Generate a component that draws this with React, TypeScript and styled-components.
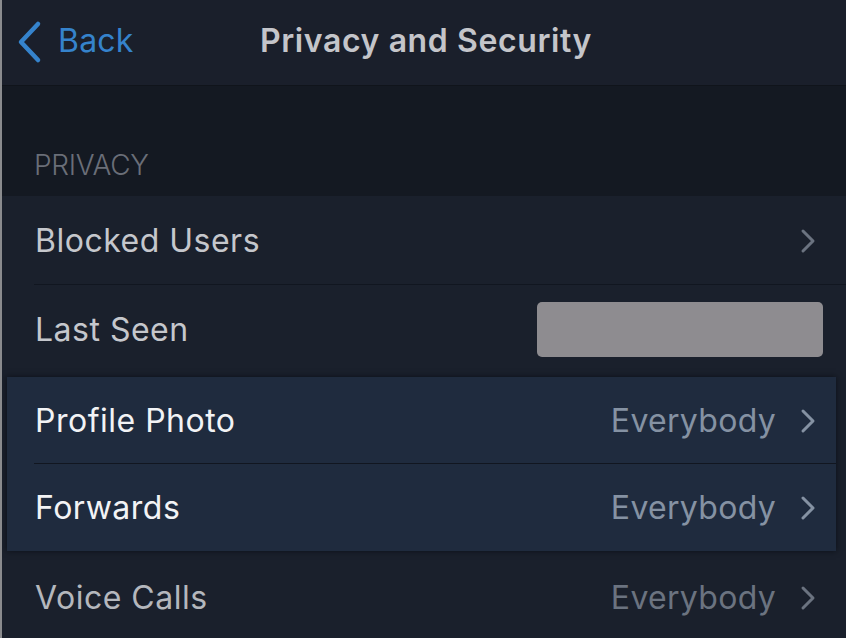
import React from "react";
import styled, { createGlobalStyle } from "styled-components";

const GlobalStyle = createGlobalStyle`
  html, body {
    margin: 0;
    padding: 0;
    background: #141922;
  }
  body {
    font-family: Inter, "Noto Sans", sans-serif;
    -webkit-font-smoothing: antialiased;
  }
`;

type Tone = "normal" | "lit" | "dim";

type Item = {
  label: string;
  value?: string;
  hidden?: boolean;
  chevron?: boolean;
};

const Chevron = ({ color }: { color: string }) => (
  <svg width="16" height="26" viewBox="0 0 16 26">
    <path
      d="M3 3 L13 13 L3 23"
      fill="none"
      stroke={color}
      strokeWidth="3"
      strokeLinecap="round"
      strokeLinejoin="round"
    />
  </svg>
);

const Row = ({ label, value, hidden, chevron, tone, last }: Item & { tone: Tone; last?: boolean }) => (
  <RowWrap $last={last} $lit={tone === "lit"}>
    <Label $tone={tone}>{label}</Label>
    <Right>
      {hidden && <Redacted />}
      {value && <Value $tone={tone}>{value}</Value>}
      {chevron && <Chevron color={tone === "lit" ? "#8592a3" : "#6b7380"} />}
    </Right>
  </RowWrap>
);

const App = () => {
  return (
    <Page>
      <GlobalStyle />
      <NavBar>
        <BackButton>
          <svg width="28" height="44" viewBox="0 0 28 44">
            <path
              d="M22 4 L5 22 L22 40"
              fill="none"
              stroke="#3583cc"
              strokeWidth="4.5"
              strokeLinecap="round"
              strokeLinejoin="round"
            />
          </svg>
          <span>Back</span>
        </BackButton>
        <Title>Privacy and Security</Title>
      </NavBar>

      <SectionHeader>PRIVACY</SectionHeader>

      <List>
        <Row label="Blocked Users" chevron tone="normal" />
        <Row label="Last Seen" hidden tone="normal" last />
        <Highlight>
          <Row label="Profile Photo" value="Everybody" chevron tone="lit" />
          <Row label="Forwards" value="Everybody" chevron tone="lit" last />
        </Highlight>
        <Row label="Voice Calls" value="Everybody" chevron tone="dim" last />
      </List>
    </Page>
  );
};

export default App;

const Page = styled.div`
  width: 846px;
  height: 638px;
  overflow: hidden;
  box-sizing: border-box;
  border-left: 2px solid #8a8b8e;
  display: flex;
  flex-direction: column;
  background: #1a202c;
`;

const NavBar = styled.div`
  height: 86px;
  flex-shrink: 0;
  background: #1a1f2b;
  border-bottom: 1px solid #10141b;
  box-sizing: border-box;
  display: flex;
  align-items: center;
  justify-content: center;
  position: relative;
`;

const BackButton = styled.div`
  position: absolute;
  left: 14px;
  top: 20px;
  display: flex;
  align-items: center;
  gap: 14px;
  color: #3583cc;
  font-size: 32px;
  letter-spacing: 0.2px;

  span {
    margin-top: -3px;
  }
`;

const Title = styled.div`
  color: #c4c5ca;
  font-size: 32px;
  font-weight: 600;
  letter-spacing: 0.6px;
  margin-top: -4px;
  margin-left: 4px;
`;

const SectionHeader = styled.div`
  height: 110px;
  flex-shrink: 0;
  background: #141922;
  box-sizing: border-box;
  padding: 0 0 14px 32px;
  display: flex;
  align-items: flex-end;
  color: #6a6e78;
  font-size: 28px;
  font-weight: 300;
  letter-spacing: -0.3px;
`;

const List = styled.div`
  display: flex;
  flex-direction: column;
  background: #1a202c;
`;

const Highlight = styled.div`
  margin: 3px 10px 2px 5px;
  background: #1f2b3e;
  box-shadow: 0 0 6px rgba(5, 8, 14, 0.7);
  display: flex;
  flex-direction: column;
`;

const RowWrap = styled.div<{ $last?: boolean; $lit?: boolean }>`
  height: ${(p) => (p.$lit ? "87px" : "89px")};
  box-sizing: border-box;
  display: flex;
  align-items: center;
  justify-content: space-between;
  padding: ${(p) => (p.$lit ? "0 20px 0 28px" : "0 30px 0 33px")};
  position: relative;

  &::after {
    content: "";
    display: ${(p) => (p.$last ? "none" : "block")};
    position: absolute;
    left: ${(p) => (p.$lit ? "27px" : "32px")};
    right: 0;
    bottom: 0;
    height: 1px;
    background: #111620;
  }
`;

const toneColor = (t: Tone) => (t === "lit" ? "#f2f3f5" : t === "dim" ? "#b4b7bd" : "#c5c7cc");
const valueColor = (t: Tone) => (t === "lit" ? "#8592a3" : "#6b7380");

const Label = styled.div<{ $tone: Tone }>`
  color: ${(p) => toneColor(p.$tone)};
  font-size: 32px;
  letter-spacing: 0.5px;
`;

const Right = styled.div`
  display: flex;
  align-items: center;
  gap: 24px;
`;

const Value = styled.div<{ $tone: Tone }>`
  color: ${(p) => valueColor(p.$tone)};
  font-size: 32px;
  letter-spacing: 0.3px;
`;

const Redacted = styled.div`
  width: 286px;
  height: 55px;
  border-radius: 5px;
  background: #8e8c90;
  margin-right: -7px;
`;
